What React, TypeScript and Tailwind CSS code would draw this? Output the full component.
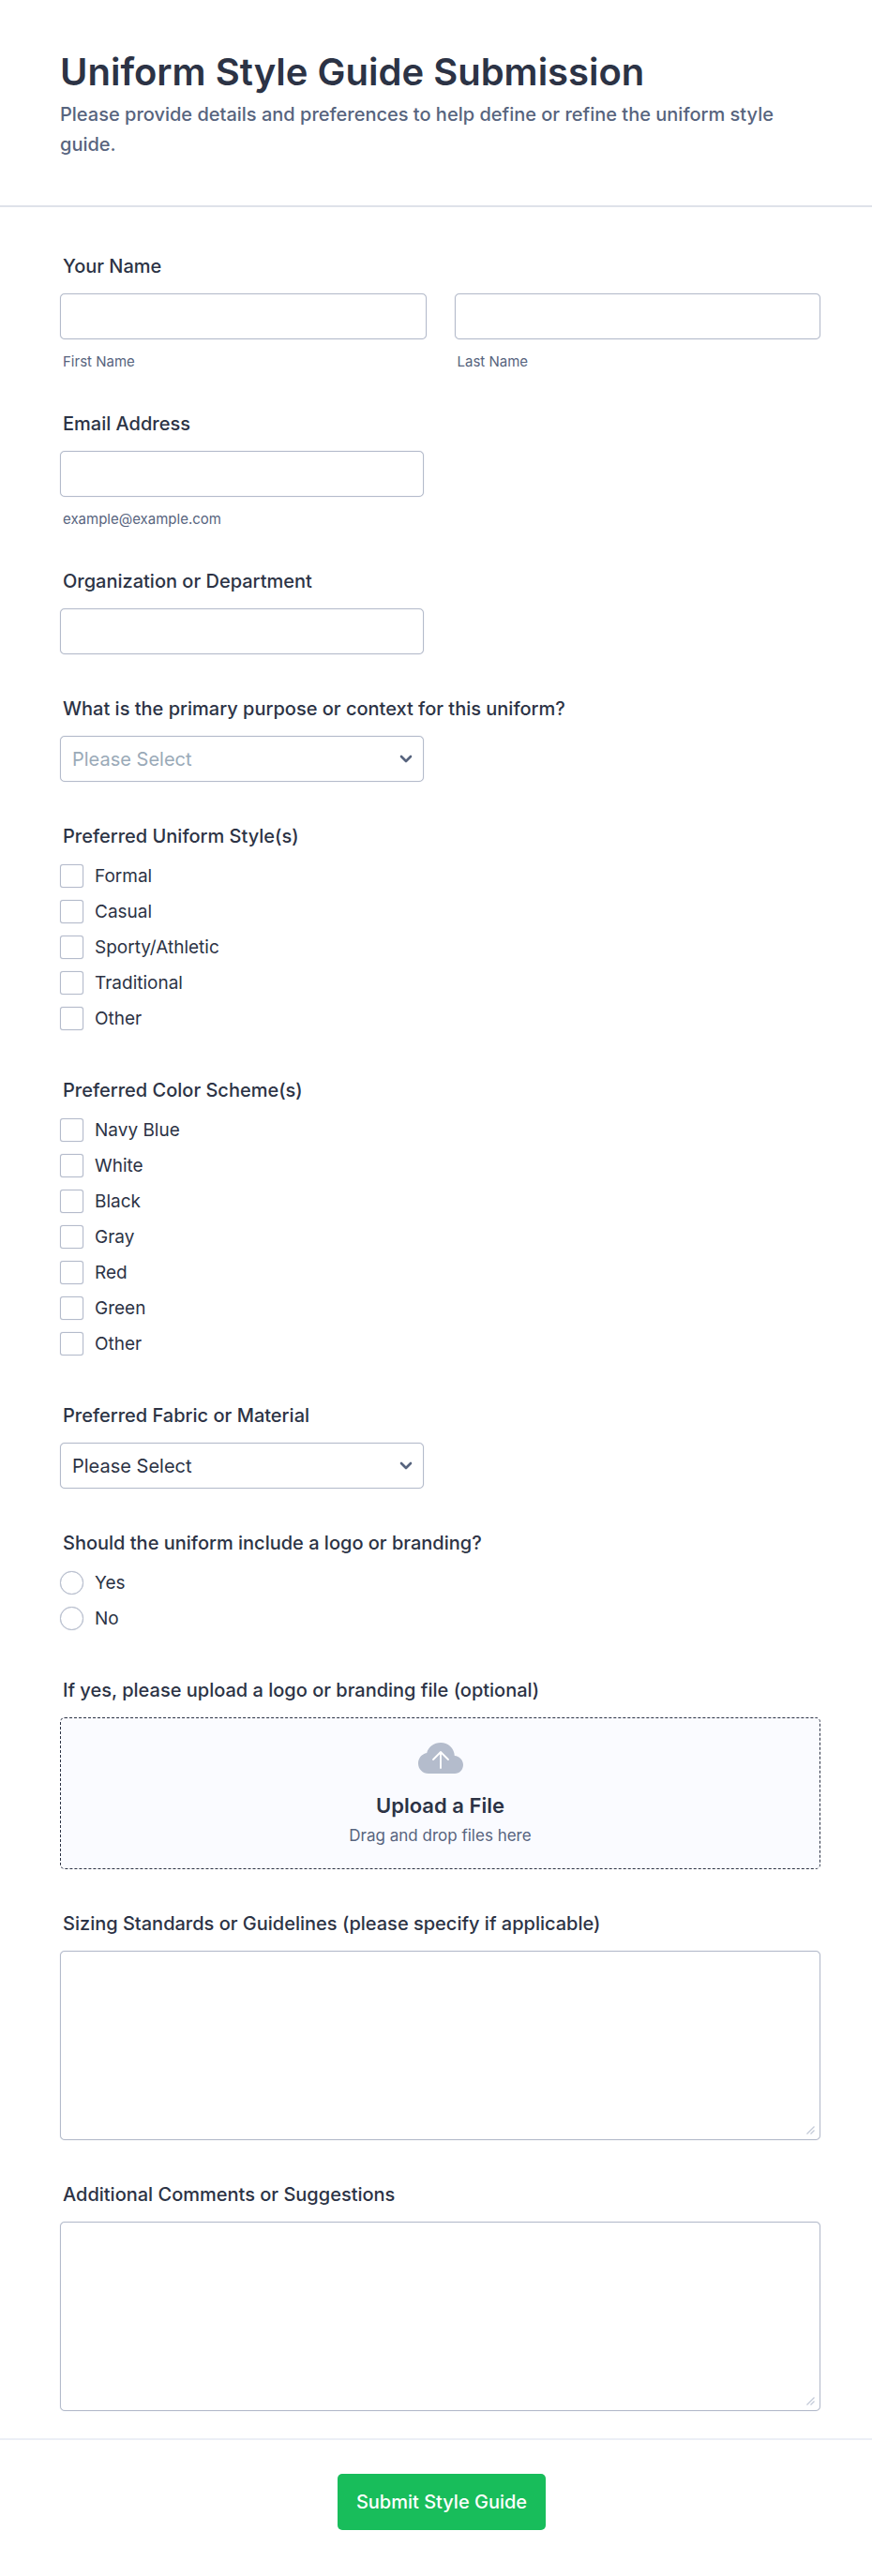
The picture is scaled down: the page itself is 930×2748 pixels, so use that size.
import { useState } from 'react';

const boxClass = 'border border-[#b4bbcb] bg-white shadow-[0_0_1px_#b4bbcb]';
const inputClass = `block h-[49px] w-full rounded-[5px] px-3 text-[20px] outline-none focus:border-blue-500 ${boxClass}`;
const labelClass = 'mb-4 block px-[3px] text-[20px] leading-[26px] font-medium text-[#2c3345]';
const hintClass = 'mt-4 block px-[3px] text-[15px] leading-4 text-[#57647e]';

const styles = ['Formal', 'Casual', 'Sporty/Athletic', 'Traditional', 'Other'];
const colors = ['Navy Blue', 'White', 'Black', 'Gray', 'Red', 'Green', 'Other'];
const purposes = ['Corporate', 'School', 'Sports Team', 'Healthcare', 'Hospitality'];
const fabrics = ['Cotton', 'Polyester', 'Wool', 'Blend'];

function TextField({ id, label, hint, type = 'text' }: { id: string; label: string; hint?: string; type?: string }) {
  return (
    <div>
      <label htmlFor={id} className={labelClass}>{label}</label>
      <div className="max-w-[388px]">
        <input id={id} type={type} className={`${inputClass} text-[#2c3345]`} />
      </div>
      {hint && <label htmlFor={id} className={hintClass}>{hint}</label>}
    </div>
  );
}

function SelectField({ id, label, options, muted }: { id: string; label: string; options: string[]; muted?: boolean }) {
  const [value, setValue] = useState('');
  return (
    <div>
      <label htmlFor={id} className={labelClass}>{label}</label>
      <div className="relative max-w-[388px]">
        <select
          id={id}
          value={value}
          onChange={(e) => setValue(e.target.value)}
          className={`${inputClass} appearance-none ${muted && !value ? 'text-[#9aaab8]' : 'text-[#2c3345]'}`}
        >
          <option value="">Please Select</option>
          {options.map((o) => <option key={o}>{o}</option>)}
        </select>
        <svg viewBox="0 0 14 9" className="pointer-events-none absolute top-5 right-3 h-[9px] w-3.5" fill="none" stroke="#57647e" strokeWidth="2.6" strokeLinecap="round" strokeLinejoin="round">
          <path d="M2 2l5 5 5-5" />
        </svg>
      </div>
    </div>
  );
}

function ChoiceField({ name, label, type, options }: { name: string; label: string; type: 'checkbox' | 'radio'; options: string[] }) {
  return (
    <fieldset>
      <legend className={labelClass}>{label}</legend>
      <div className="flex flex-col items-start gap-[13px] pt-px pb-1.5">
        {options.map((o) => (
          <label key={o} className="flex items-center gap-3 text-[19px] leading-[25px] text-[#2c3345]">
            <input
              type={type}
              name={name}
              value={o}
              className={`size-[25px] appearance-none checked:border-blue-500 checked:bg-blue-500 ${boxClass} ${type === 'radio' ? 'rounded-full' : 'rounded-[3px]'}`}
            />
            {o}
          </label>
        ))}
      </div>
    </fieldset>
  );
}

function TextAreaField({ id, label }: { id: string; label: string }) {
  return (
    <div>
      <label htmlFor={id} className={labelClass}>{label}</label>
      <div className="relative">
        <textarea id={id} className={`block h-[202px] w-full resize-none rounded-[5px] p-3 text-[20px] text-[#2c3345] outline-none focus:border-blue-500 ${boxClass}`} />
        <svg viewBox="0 0 9 9" className="pointer-events-none absolute right-1.5 bottom-1.5 size-[9px]" fill="none" stroke="#c3cad8" strokeWidth="1.3">
          <path d="M0.5 8.5l8-8M4.5 8.5l4-4" />
        </svg>
      </div>
    </div>
  );
}

function NameInput({ id, hint }: { id: string; hint: string }) {
  return (
    <div className="flex-1">
      <input id={id} className={`${inputClass} text-[#2c3345]`} />
      <label htmlFor={id} className={hintClass}>{hint}</label>
    </div>
  );
}

export default function App() {
  return (
    <form className="bg-white font-['Inter',sans-serif]" onSubmit={(e) => e.preventDefault()}>
      <header className="border-b-2 border-[#dfe2ea] pt-[52px] pr-[55px] pb-[49px] pl-16">
        <h1 className="text-[40px] leading-[50px] font-semibold text-[#2c3345]">Uniform Style Guide Submission</h1>
        <p className="mt-1 text-[20px] leading-8 font-medium text-[#57647e]">
          Please provide details and preferences to help define or refine the uniform style guide.
        </p>
      </header>

      <main className="flex flex-col gap-[45px] pt-[50px] pr-[55px] pb-[29px] pl-16">
        <fieldset>
          <legend className={labelClass}>Your Name</legend>
          <div className="flex gap-[30px]">
            <NameInput id="first" hint="First Name" />
            <NameInput id="last" hint="Last Name" />
          </div>
        </fieldset>
        <TextField id="email" type="email" label="Email Address" hint="example@example.com" />
        <TextField id="org" label="Organization or Department" />
        <SelectField id="purpose" label="What is the primary purpose or context for this uniform?" options={purposes} muted />
        <ChoiceField name="style" type="checkbox" label="Preferred Uniform Style(s)" options={styles} />
        <ChoiceField name="color" type="checkbox" label="Preferred Color Scheme(s)" options={colors} />
        <SelectField id="fabric" label="Preferred Fabric or Material" options={fabrics} />
        <ChoiceField name="branding" type="radio" label="Should the uniform include a logo or branding?" options={['Yes', 'No']} />
        <div>
          <label htmlFor="file" className={labelClass}>If yes, please upload a logo or branding file (optional)</label>
          <label htmlFor="file" className="flex h-[162px] cursor-pointer flex-col items-center rounded-[5px] border border-dashed border-[#2c3345] bg-[#fafbff] pt-[26px]">
            <svg viewBox="0 0 48 33" className="h-[33px] w-12" aria-hidden="true">
              <path fill="#b4bccc" d="M38.800 14C38.500 6 32 0 24 0 17 0 11 4.300 9.200 11 3.800 12 0 16.600 0 22 0 28.300 4.800 33 11 33h28c5.200 0 9-4.200 9-9.300 0-5-3.800-9.200-9.200-9.700z" />
              <path fill="none" stroke="#fff" strokeWidth="1.8" strokeLinecap="round" strokeLinejoin="round" d="M24 27V10M16 18l8-8 8 8" />
            </svg>
            <span className="mt-5 text-[22px] leading-7 font-semibold text-[#2c3345]">Upload a File</span>
            <span className="mt-1.5 text-[17px] leading-6 text-[#57647e]">Drag and drop files here</span>
            <input id="file" type="file" className="sr-only" />
          </label>
        </div>
        <TextAreaField id="sizing" label="Sizing Standards or Guidelines (please specify if applicable)" />
        <TextAreaField id="comments" label="Additional Comments or Suggestions" />
      </main>

      <footer className="flex justify-center border-t-2 border-[#eceff6] pt-9 pr-[52px] pb-[50px] pl-16">
        <button type="submit" className="h-[60px] rounded-[5px] bg-[#18bd5b] px-5 text-[20px] font-medium text-white">Submit Style Guide</button>
      </footer>
    </form>
  );
}
